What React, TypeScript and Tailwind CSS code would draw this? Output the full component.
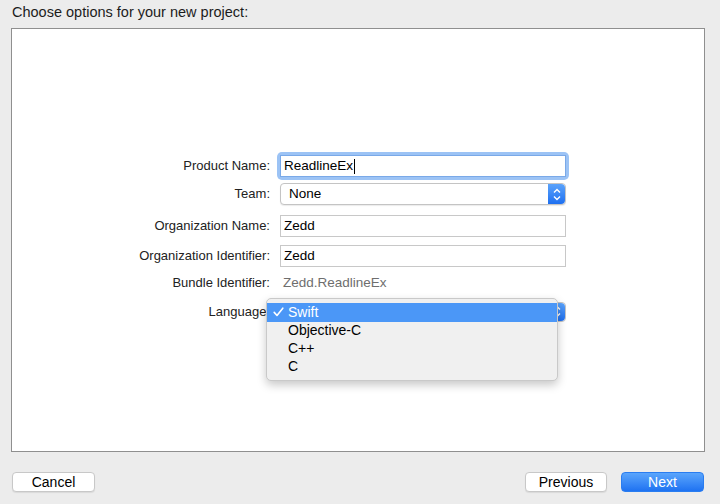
import React from 'react';

const font = { fontFamily: '"Helvetica Neue", "Liberation Sans", Arial, sans-serif' };

function Stepper() {
  return (
    <div className="flex h-full w-[17px] items-center justify-center rounded-r-[4px] bg-gradient-to-b from-[#5ba3fb] to-[#1d6ff0]">
      <svg width="8" height="13" viewBox="0 0 8 13" fill="none" stroke="white" strokeWidth="1.4">
        <path d="M1 4.5 L4 1.5 L7 4.5" />
        <path d="M1 8.5 L4 11.5 L7 8.5" />
      </svg>
    </div>
  );
}

function Label({ children }: { children: React.ReactNode }) {
  return <div className="text-right text-[13px] text-[#222]">{children}</div>;
}

function TextBox({ value }: { value: string }) {
  return (
    <div className="flex h-[22px] items-center border border-[#c8c8c8] bg-white px-[3px] text-[13.5px] text-black">
      {value}
    </div>
  );
}

export default function App() {
  return (
    <div className="flex h-[504px] w-[720px] flex-col bg-[#ececec] text-[13px]" style={font}>
      <div className="px-[12px] pt-[4px] pb-[8px] text-[14.5px] leading-[16px] text-[#1c1c1c]">
        Choose options for your new project:
      </div>

      {/* options panel */}
      <div className="ml-[11px] h-[424px] w-[694px] border border-[#8f8f8f] bg-white">
        <div className="grid grid-cols-[258px_286px] items-center gap-x-[10px] pt-[126px]">
          <Label>Product Name:</Label>
          <div className="h-[22px] rounded-[2px] shadow-[0_0_0_3px_#9cc3f5]">
            <div className="flex h-[22px] items-center border border-[#7aa9e8] bg-white px-[3px] text-[13.5px] text-black">
              ReadlineEx<span className="ml-[1px] inline-block h-[15px] w-px bg-black" />
            </div>
          </div>

          <div className="col-span-2 h-[6px]" />
          <Label>Team:</Label>
          <div className="flex h-[22px] items-center justify-between rounded-[4px] border border-[#c4c4c4] bg-white pl-[8px] text-[13.5px] text-black shadow-[0_1px_1px_rgba(0,0,0,0.08)]">
            <span>None</span>
            <Stepper />
          </div>

          <div className="col-span-2 h-[10px]" />
          <Label>Organization Name:</Label>
          <TextBox value="Zedd" />

          <div className="col-span-2 h-[8px]" />
          <Label>Organization Identifier:</Label>
          <TextBox value="Zedd" />

          <div className="col-span-2 h-[6px]" />
          <Label>Bundle Identifier:</Label>
          <div className="h-[16px] pl-[3px] text-[13.5px] leading-[16px] text-[#6e6e6e]">Zedd.ReadlineEx</div>

          <div className="col-span-2 h-[9px]" />
          <Label>Language:</Label>
          <div className="relative h-[20px]">
            <div className="flex h-[20px] justify-end rounded-[4px] border border-[#c4c4c4] bg-white">
              <Stepper />
            </div>
            {/* open popup menu */}
            <div className="absolute left-[-14px] top-[-4px] w-[292px] rounded-[5px] border border-[#c9c9c9] bg-[#f0f0f0] py-[4px] shadow-[0_4px_10px_rgba(0,0,0,0.22)]">
              <div className="flex h-[19px] items-center bg-[#4b97f7] text-white">
                <span className="flex w-[21px] justify-center pl-[2px]">
                  <svg width="11" height="10" viewBox="0 0 11 10" fill="none" stroke="white" strokeWidth="1.6" strokeLinecap="round" strokeLinejoin="round">
                    <path d="M1.2 5.4 L4 8.5 L9.8 1.2" />
                  </svg>
                </span>
                <span className="text-[14px]">Swift</span>
              </div>
              <div className="flex h-[18px] items-center pl-[21px] text-[14px] text-black">Objective-C</div>
              <div className="flex h-[18px] items-center pl-[21px] text-[14px] text-black">C++</div>
              <div className="flex h-[18px] items-center pl-[21px] text-[14px] text-black">C</div>
            </div>
          </div>
        </div>
      </div>

      {/* footer buttons */}
      <div className="flex items-center pl-[12px] pr-[16px] pt-[20px]">
        <button className="h-[20px] w-[83px] rounded-[4px] border border-[#c8c8c8] bg-white text-[14px] leading-[18px] text-black shadow-[0_1px_1px_rgba(0,0,0,0.08)]">
          Cancel
        </button>
        <div className="flex-1" />
        <button className="h-[20px] w-[82px] rounded-[4px] border border-[#c8c8c8] bg-white text-[14px] leading-[18px] text-black shadow-[0_1px_1px_rgba(0,0,0,0.08)]">
          Previous
        </button>
        <button className="ml-[14px] h-[20px] w-[83px] rounded-[4px] border border-[#2a7df0] bg-gradient-to-b from-[#5aa5fc] to-[#1e72f1] text-[14px] leading-[18px] text-white">
          Next
        </button>
      </div>
    </div>
  );
}
